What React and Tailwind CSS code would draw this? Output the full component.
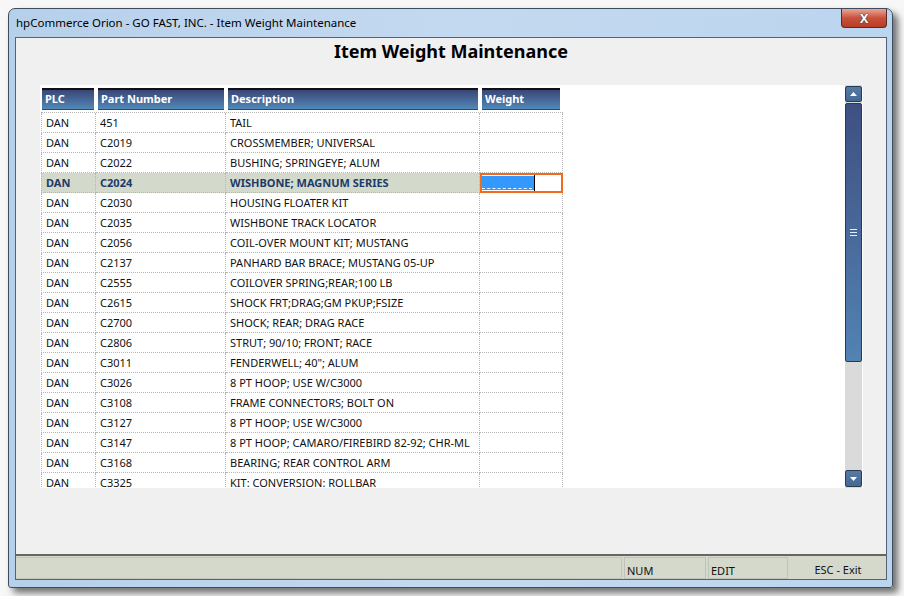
import React from 'react';

const rows = [
    ['DAN', '451', 'TAIL'],
    ['DAN', 'C2019', 'CROSSMEMBER; UNIVERSAL'],
    ['DAN', 'C2022', 'BUSHING; SPRINGEYE; ALUM'],
    ['DAN', 'C2024', 'WISHBONE; MAGNUM SERIES'],
    ['DAN', 'C2030', 'HOUSING FLOATER KIT'],
    ['DAN', 'C2035', 'WISHBONE TRACK LOCATOR'],
    ['DAN', 'C2056', 'COIL-OVER MOUNT KIT; MUSTANG'],
    ['DAN', 'C2137', 'PANHARD BAR BRACE; MUSTANG 05-UP'],
    ['DAN', 'C2555', 'COILOVER SPRING;REAR;100 LB'],
    ['DAN', 'C2615', 'SHOCK FRT;DRAG;GM PKUP;FSIZE'],
    ['DAN', 'C2700', 'SHOCK; REAR; DRAG RACE'],
    ['DAN', 'C2806', 'STRUT; 90/10; FRONT; RACE'],
    ['DAN', 'C3011', 'FENDERWELL; 40"; ALUM'],
    ['DAN', 'C3026', '8 PT HOOP; USE W/C3000'],
    ['DAN', 'C3108', 'FRAME CONNECTORS; BOLT ON'],
    ['DAN', 'C3127', '8 PT HOOP; USE W/C3000'],
    ['DAN', 'C3147', '8 PT HOOP; CAMARO/FIREBIRD 82-92; CHR-ML'],
    ['DAN', 'C3168', 'BEARING; REAR CONTROL ARM'],
    ['DAN', 'C3325', 'KIT: CONVERSION: ROLLBAR'],
];

const font = { fontFamily: '"Noto Sans", "Open Sans", sans-serif' };

const HeaderCell = ({ label, width }) => (
    <div className='px-[2px] h-[22px]' style={{ width }}>
        <div className='h-full border-t-2 border-[#111] border-b border-b-[#34466e] bg-gradient-to-b from-[#3a4677] to-[#5189b8] text-white font-bold text-[11px] leading-[18px] pl-[3px]'>
            {label}
        </div>
    </div>
);

const cellBase = 'h-[20px] leading-[19px] text-[11px] pl-[4px] border-r border-dotted border-[#b5b5b5] border-b overflow-hidden whitespace-nowrap';

const App = () => {
    return (
        <div className='w-[904px] h-[596px] bg-[#f7f7f7] pt-[8px] pl-[8px] overflow-hidden' style={font}>
            <div className='w-[885px] h-[580px] rounded-t-[7px] rounded-b-[3px] border border-[#3e4d5e] bg-gradient-to-r from-[#b7d0ea] via-[#c3d9f0] to-[#bcd5ee] shadow-[5px_5px_7px_rgba(0,0,0,0.55)] flex flex-col'>
                {/* title bar */}
                <div className='h-[28px] flex items-start relative'>
                    <span className='text-[11.5px] text-black pl-[7px] pt-[6px] leading-[16px]'>hpCommerce Orion - GO FAST, INC. - Item Weight Maintenance</span>
                    <div className='absolute right-[5px] top-0 w-[46px] h-[19px] rounded-b-[4px] border border-[#5a2a24] border-t-0 bg-gradient-to-b from-[#e8a597] via-[#c9503a] to-[#b83d27] flex items-center justify-center'>
                        <span className='text-white font-bold text-[13px] leading-none' style={{ textShadow: '0 0 1px #222, 0 0 1px #222' }}>X</span>
                    </div>
                </div>

                {/* client */}
                <div className='ml-[6px] mr-[5px] mb-[7px] flex-1 border border-[#556273] bg-[#f0f0f0] flex flex-col'>
                    <div className='text-center font-bold text-[18px] text-black leading-[24px] pt-[1px] h-[47px]'>Item Weight Maintenance</div>

                    <div className='ml-[24px] w-[823px] h-[403px] bg-white flex'>
                        <div className='flex-1 overflow-hidden pt-[3px]'>
                            <div className='flex'>
                                <HeaderCell label='PLC' width={56} />
                                <HeaderCell label='Part Number' width={130} />
                                <HeaderCell label='Description' width={254} />
                                <HeaderCell label='Weight' width={82} />
                            </div>
                            <div className='mt-[2px] ml-[1px] border-t border-dotted border-[#b5b5b5] w-[522px]'>
                                {rows.map((r, i) => {
                                    const sel = r[1] === 'C2024';
                                    const rowCls = sel ? 'bg-[#d3d9cb] font-bold text-[#1e3a68]' : 'text-[#111]';
                                    return (
                                        <div key={i} className={'flex ' + rowCls}>
                                            <div className={cellBase + ' w-[55px] border-l'}>{r[0]}</div>
                                            <div className={cellBase + ' w-[130px]'}>{r[1]}</div>
                                            <div className={cellBase + ' w-[254px]'}>{r[2]}</div>
                                            {sel ? (
                                                <div className='w-[83px] h-[20px] bg-white border-2 border-[#f26b1d] flex items-center'>
                                                    <div className='w-[52px] h-[14px] bg-[#3399ff] relative'>
                                                        <div className='absolute left-0 right-[2px] bottom-[1px] border-b border-dashed border-white'></div>
                                                    </div>
                                                    <div className='w-[1px] h-[16px] bg-black'></div>
                                                </div>
                                            ) : (
                                                <div className={cellBase + ' w-[83px] bg-white'}></div>
                                            )}
                                        </div>
                                    );
                                })}
                            </div>
                        </div>

                        {/* scrollbar */}
                        <div className='w-[17px] mr-[1px] pt-[1px] pb-[1px] flex flex-col bg-[#dadada]'>
                            <div className='h-[16px] rounded-[2px] border border-[#2c3a4e] bg-gradient-to-b from-[#5679a6] to-[#456993] flex items-center justify-center'>
                                <svg width='7' height='4' viewBox='0 0 7 4'><path d='M0 4 L3.5 0 L7 4 Z' fill='white' /></svg>
                            </div>
                            <div className='h-[259px] mt-[1px] rounded-[2px] border border-[#2c3a4e] bg-gradient-to-b from-[#3e5081] to-[#5283b3] flex items-center justify-center'>
                                <svg width='7' height='7' viewBox='0 0 7 7'>
                                    <rect x='0' y='0' width='7' height='1' fill='#e8eef6' />
                                    <rect x='0' y='3' width='7' height='1' fill='#e8eef6' />
                                    <rect x='0' y='6' width='7' height='1' fill='#e8eef6' />
                                </svg>
                            </div>
                            <div className='flex-1'></div>
                            <div className='h-[17px] rounded-[2px] border border-[#2c3a4e] bg-gradient-to-b from-[#5679a6] to-[#456993] flex items-center justify-center'>
                                <svg width='7' height='4' viewBox='0 0 7 4'><path d='M0 0 L7 0 L3.5 4 Z' fill='white' /></svg>
                            </div>
                        </div>
                    </div>

                    <div className='flex-1'></div>

                    {/* status bar */}
                    <div className='h-[25px] border-t-2 border-[#666] bg-[#d4d9cb] flex text-[11px] text-[#111] leading-[20px] pt-[1px]'>
                        <div className='w-[606px] border border-[#c2c6bb] border-l-0'></div>
                        <div className='w-[82px] ml-[2px] border border-[#bfc3b8] pl-[2px] pt-[3px]'>NUM</div>
                        <div className='w-[80px] ml-[2px] border border-[#bfc3b8] pl-[2px] pt-[3px]'>EDIT</div>
                        <div className='flex-1 ml-[2px] text-center pt-[3px]'>ESC - Exit</div>
                    </div>
                </div>
            </div>
        </div>
    );
};

export default App;
